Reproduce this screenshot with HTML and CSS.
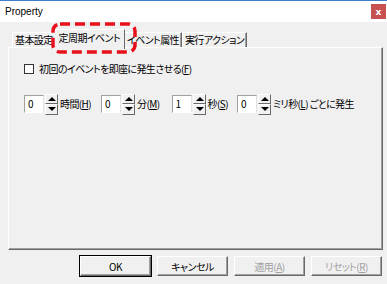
FILE: index.html
```html
<!DOCTYPE html>
<html lang="ja">
<head>
  <meta charset="UTF-8" />
  <title>Property</title>
  <link rel="stylesheet" href="styles.css">
</head>
<body>

<div class="window">
  <div class="titlebar">
    <span class="title">Property</span>
    <span class="close">x</span>
  </div>

  <div class="dialog">
    <div class="tabs">
      <div class="tab">基本設定</div>
      <div class="tab active">
        定周期イベント
        <svg class="mark" width="86" height="32" viewBox="0 0 86 32">
          <rect x="2" y="2" width="82" height="28" rx="7" ry="7" fill="none" stroke="#e8101a" stroke-width="3.5" stroke-dasharray="10 5"/>
        </svg>
      </div>
      <div class="tab">イベント属性</div>
      <div class="tab">実行アクション</div>
    </div>

    <div class="panel">
      <div class="check-row">
        <span class="checkbox"></span>
        <span>初回のイベントを即座に発生させる(<u>F</u>)</span>
      </div>

      <div class="spin-row">
        <div class="spin"><span class="field">0</span><span class="arrows"><i class="up"></i><i class="down"></i></span></div>
        <span class="unit u1">時間(<u>H</u>)</span>
        <div class="spin"><span class="field">0</span><span class="arrows"><i class="up"></i><i class="down"></i></span></div>
        <span class="unit u2">分(<u>M</u>)</span>
        <div class="spin"><span class="field">1</span><span class="arrows"><i class="up"></i><i class="down"></i></span></div>
        <span class="unit u3">秒(<u>S</u>)</span>
        <div class="spin"><span class="field">0</span><span class="arrows"><i class="up"></i><i class="down"></i></span></div>
        <span class="unit">ミリ秒(<u>L</u>) ごとに発生</span>
      </div>
    </div>

    <div class="buttons">
      <button class="btn default">OK</button>
      <button class="btn">キャンセル</button>
      <button class="btn disabled">適用(<u>A</u>)</button>
      <button class="btn disabled">リセット(<u>R</u>)</button>
    </div>
  </div>
</div>

</body>
</html>
```

FILE: styles.css
```css
* {
  box-sizing: border-box;
}

body {
  margin: 0;
  background: #f0f0f0;
  font-family: "Noto Sans CJK JP", "Noto Sans", sans-serif;
  font-size: 10px;
  letter-spacing: -0.6px;
  font-feature-settings: "palt";
  color: #000;
}

.window {
  width: 387px;
  height: 284px;
  border-top: 1px solid #3c7dc6;
  overflow: hidden;
}

.titlebar {
  height: 21px;
  background: #fff;
  display: flex;
  align-items: center;
  justify-content: space-between;
  padding: 0 1px 0 5px;
}

.title {
  font-family: "Liberation Sans", sans-serif;
  font-size: 10px;
  letter-spacing: 0;
}

.close {
  width: 15px;
  height: 15px;
  background: #c75050;
  color: #fff;
  font-family: "DejaVu Sans", sans-serif;
  font-size: 9px;
  font-weight: bold;
  letter-spacing: 0;
  display: flex;
  align-items: center;
  justify-content: center;
}

.dialog {
  padding: 7px 4px 0 8px;
}

/* tabs */
.tabs {
  display: flex;
  align-items: flex-start;
  height: 19px;
  padding-left: 4px;
  position: relative;
  z-index: 1;
  margin-bottom: -1px;
}

.tab {
  height: 15px;
  margin-top: 3px;
  line-height: 13px;
  padding: 0 2px;
  border-top: 1px solid #fff;
  border-left: 1px solid #fff;
  border-right: 1px solid #696969;
  box-shadow: inset -1px 0 0 #a0a0a0;
  white-space: nowrap;
}

.tab.active {
  position: relative;
  height: 20px;
  margin: 0 -1px 0 -2px;
  line-height: 15px;
  padding: 0 4px;
  background: #f0f0f0;
  box-shadow: none;
}

.mark {
  position: absolute;
  left: -4px;
  top: -8px;
}

/* panel */
.panel {
  height: 203px;
  border-top: 1px solid #fff;
  border-left: 1px solid #fff;
  border-right: 1px solid #696969;
  border-bottom: 1px solid #696969;
  box-shadow: inset -1px -1px 0 #a0a0a0;
  padding: 15px 0 0 15px;
}

.check-row {
  display: flex;
  align-items: center;
  gap: 5px;
  height: 12px;
  line-height: 12px;
}

.checkbox {
  width: 10px;
  height: 10px;
  background: #fff;
  border: 1px solid #333;
}

.spin-row {
  display: flex;
  align-items: center;
  margin-top: 18px;
  height: 22px;
  line-height: 14px;
}

.spin {
  display: flex;
  align-items: center;
  gap: 1px;
}

.field {
  width: 20px;
  height: 18px;
  line-height: 16px;
  padding-left: 3px;
  background: #fff;
  border-top: 1px solid #a0a0a0;
  border-left: 1px solid #a0a0a0;
  border-bottom: 1px solid #fff;
  border-right: 1px solid #e3e3e3;
  font-size: 10px;
}

.arrows {
  display: flex;
  flex-direction: column;
  width: 13px;
  height: 21px;
}

.arrows i {
  flex: 1;
  position: relative;
  background: #f0f0f0;
  border-top: 1px solid #fff;
  border-left: 1px solid #fff;
  border-right: 1px solid #696969;
  border-bottom: 1px solid #696969;
}

.arrows i::after {
  content: "";
  position: absolute;
  left: 2px;
  top: 2px;
  border-left: 4px solid transparent;
  border-right: 4px solid transparent;
}

.arrows .up::after {
  border-bottom: 4px solid #000;
}

.arrows .down::after {
  border-top: 4px solid #000;
}

.unit {
  margin-left: 2px;
  white-space: nowrap;
}

.u1 { margin-right: 10px; }
.u2 { margin-right: 12px; }
.u3 { margin-right: 9px; }

/* buttons */
.buttons {
  display: flex;
  justify-content: flex-end;
  gap: 6px;
  margin-top: 6px;
  padding-right: 1px;
}

.btn {
  width: 71px;
  height: 20px;
  padding: 0;
  background: #f0f0f0;
  font-family: inherit;
  font-size: 10px;
  letter-spacing: -0.5px;
  font-feature-settings: "palt";
  color: #000;
  border: 1px solid;
  border-color: #fff #696969 #696969 #fff;
  box-shadow: inset -1px -1px 0 #a0a0a0;
}

.btn.default {
  outline: 1px solid #000;
  outline-offset: 0;
}

.btn.disabled {
  color: #a0a0a0;
}
```
